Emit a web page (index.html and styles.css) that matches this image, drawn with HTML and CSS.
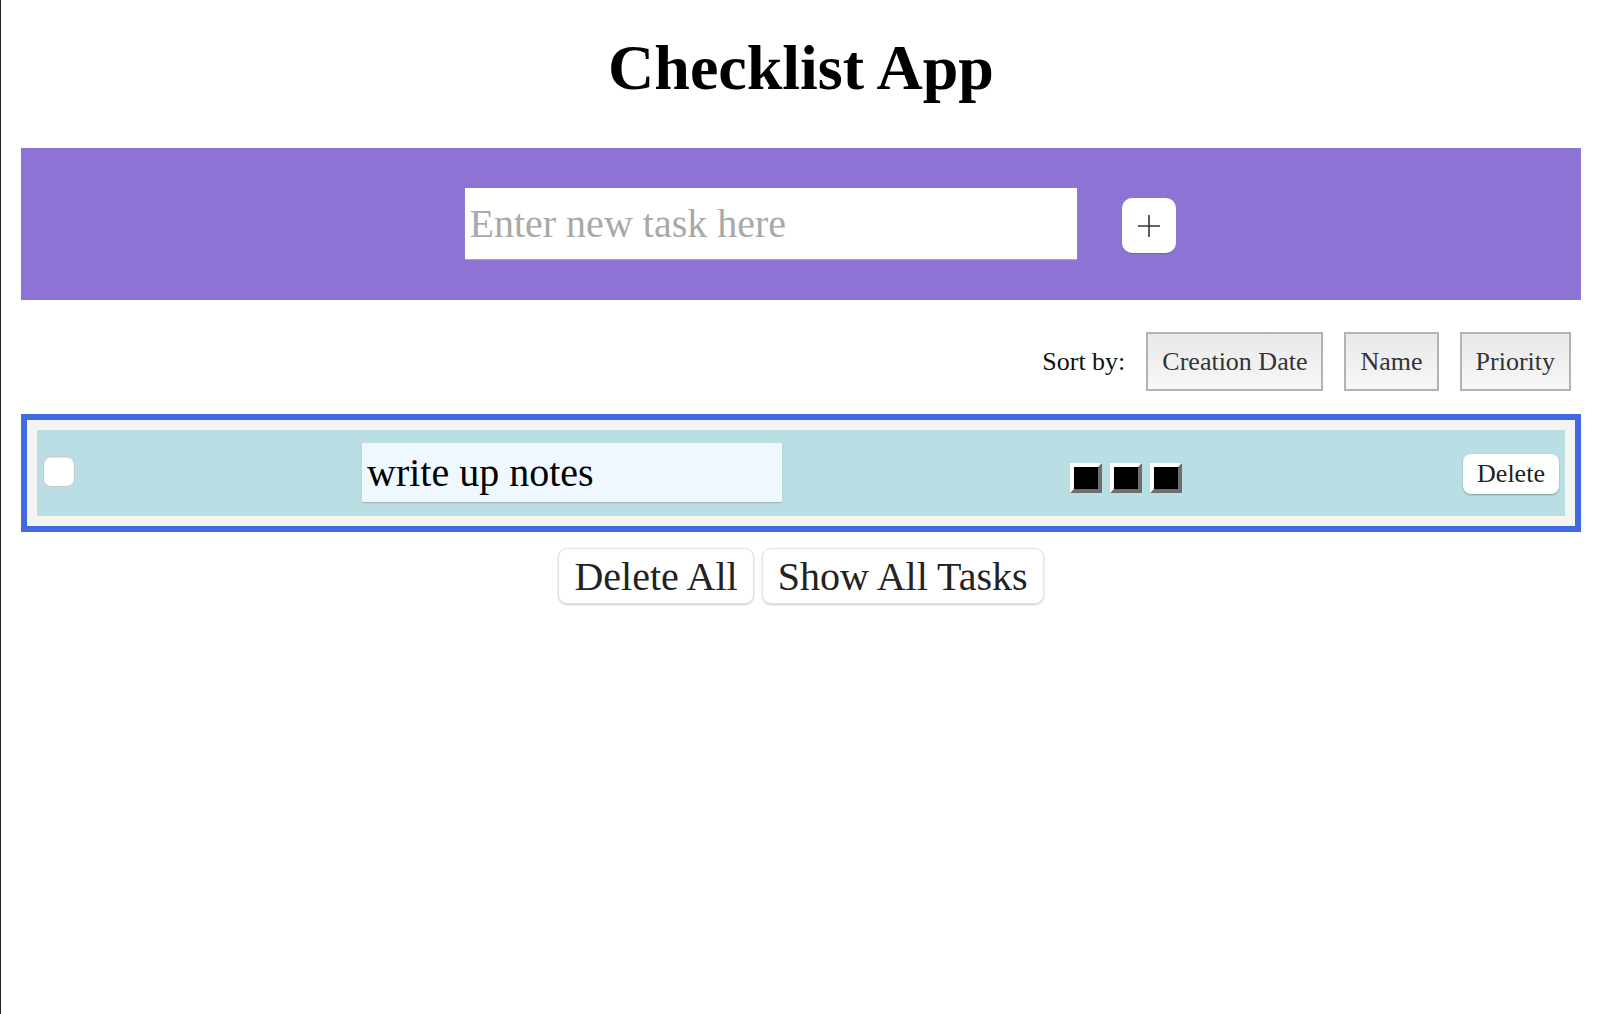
FILE: index.html
```html
<!DOCTYPE html>
<html lang="en">
<head>
<meta charset="utf-8">
<title>Checklist App</title>
<link rel="stylesheet" href="styles.css">
</head>
<body>
  <h1 class="title">Checklist App</h1>

  <div class="new-task">
    <input class="new-task-input" type="text" placeholder="Enter new task here">
    <button class="add-btn" aria-label="Add">
      <svg width="22" height="22" viewBox="0 0 22 22"><path d="M11 0V22M0 11H22" stroke="#333" stroke-width="1.6" fill="none"/></svg>
    </button>
  </div>

  <div class="sort-row">
    <span class="sort-label">Sort by:</span>
    <button class="sort-btn">Creation Date</button>
    <button class="sort-btn">Name</button>
    <button class="sort-btn">Priority</button>
  </div>

  <div class="task-list">
    <div class="task">
      <span class="task-check"></span>
      <input class="task-text" type="text" value="write up notes">
      <div class="priority">
        <button class="prio"></button>
        <button class="prio"></button>
        <button class="prio"></button>
      </div>
      <button class="task-delete">Delete</button>
    </div>
  </div>

  <div class="actions">
    <button class="action-btn">Delete All</button>
    <button class="action-btn">Show All Tasks</button>
  </div>
</body>
</html>
```
FILE: styles.css
```css
html, body {
  margin: 0;
  background: #fff;
}
body {
  border-left: 1px solid #222;
  min-height: 1014px;
  box-sizing: border-box;
  padding: 0 19px 0 20px;
  font-family: "Liberation Serif", "Times New Roman", serif;
  color: #000;
}
.title {
  margin: 31px 0 43px;
  font-size: 64px;
  font-weight: bold;
  line-height: normal;
  text-align: center;
}
.new-task {
  background: #8d74d4;
  height: 152px;
  display: flex;
  align-items: center;
  justify-content: center;
  padding-left: 38px;
  gap: 45px;
}
.new-task-input {
  width: 612px;
  height: 71px;
  box-sizing: border-box;
  border: none;
  box-shadow: 0 1px 1px #a8a8a8;
  padding: 0 5px;
  margin-top: -1px;
  font-family: "Liberation Serif", serif;
  font-size: 40px;
  color: #000;
  background: #fff;
  outline: none;
}
.new-task-input::placeholder {
  color: #a9a9a9;
}
.add-btn {
  width: 54px;
  height: 55px;
  margin-top: 3px;
  border: none;
  border-radius: 10px;
  background: #fff;
  box-shadow: 0 1px 1px rgba(0,0,0,0.15);
  display: flex;
  align-items: center;
  justify-content: center;
  padding: 0;
}
.sort-row {
  margin-top: 32px;
  height: 59px;
  display: flex;
  justify-content: flex-end;
  align-items: center;
  gap: 21px;
  padding-right: 10px;
}
.sort-label {
  font-size: 26px;
  color: #111;
}
.sort-btn {
  height: 59px;
  box-sizing: border-box;
  border: 2px solid #b3b3b3;
  background: linear-gradient(#e9e9e9, #f7f7f7);
  padding: 0 14px;
  font-family: "Liberation Serif", serif;
  font-size: 26px;
  color: #333;
}
.task-list {
  margin-top: 23px;
  border: 6px solid #4169e1;
  background: #f4f4f4;
  padding: 10px;
}
.task {
  background: #b9dee3;
  height: 86px;
  display: flex;
  align-items: center;
  justify-content: space-between;
}
.task-check {
  width: 32px;
  height: 31px;
  box-sizing: border-box;
  margin: -3px 6px 0;
  background: #fff;
  border: 1px solid #c9c9c9;
  border-radius: 8px;
  box-shadow: inset 0 1px 2px rgba(0,0,0,0.12);
}
.task-text {
  width: 420px;
  height: 59px;
  box-sizing: border-box;
  margin-top: -1px;
  border: none;
  box-shadow: 0 1px 1px #a3b5b9;
  background: #f0f8ff;
  padding: 0 5px;
  font-family: "Liberation Serif", serif;
  font-size: 40px;
  color: #000;
}
.priority {
  display: flex;
  gap: 8px;
  margin-left: 7px;
  margin-top: 10px;
}
.prio {
  width: 32px;
  height: 30px;
  box-sizing: border-box;
  padding: 0;
  border: 4px solid;
  border-color: #fff #6e6e6e #6e6e6e #fff;
  background: #000;
}
.task-delete {
  width: 96px;
  height: 40px;
  margin: 2px 6px 0 0;
  border: none;
  border-radius: 8px;
  background: #fff;
  box-shadow: 0 1px 2px rgba(0,0,0,0.3);
  font-family: "Liberation Serif", serif;
  font-size: 26px;
  color: #222;
  padding: 0;
}
.actions {
  margin-top: 16px;
  display: flex;
  justify-content: center;
  gap: 8px;
}
.action-btn {
  height: 56px;
  padding: 0 15px;
  border: 1px solid #e2e2e2;
  border-radius: 9px;
  background: #fff;
  box-shadow: 0 1px 2px rgba(0,0,0,0.2);
  font-family: "Liberation Serif", serif;
  font-size: 40px;
  color: #222;
}
```
